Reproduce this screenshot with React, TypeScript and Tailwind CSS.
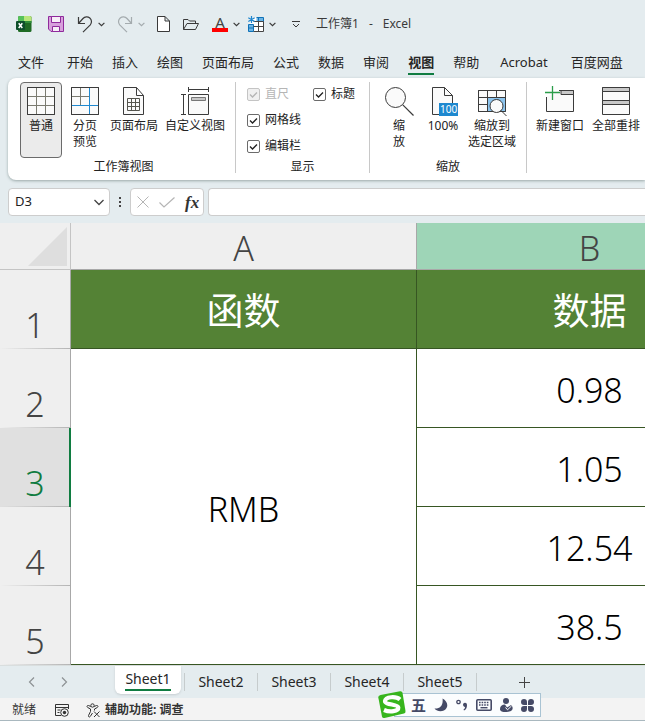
import type { ReactNode } from "react";
import clsx from "clsx";

const Chevron = ({ className }: { className?: string }) => (
  <svg viewBox="0 0 7 5" fill="none" stroke="currentColor" strokeWidth="1.2" className={clsx("w-[7px] h-[5px]", className)}>
    <path d="M.6.8 3.5 3.7 6.4.8" />
  </svg>
);

const TitleBar = () => (
  <header className="flex items-center h-12 pl-4 text-[#3a3a3a]">
    <svg viewBox="0 0 16 16" className="w-4 h-4">
      <rect x="2" y="0" width="13.5" height="16" rx="1.5" fill="#1f6b24" />
      <path d="M2 5V1.500A1.500 1.500 0 0 1 3.500 0H8v5z" fill="#56c15a" />
      <path d="M8 0h6a1.500 1.500 0 0 1 1.500 1.500V5H8z" fill="#b9e67a" />
      <path d="M2 5h13.500v2H2z" fill="#2f8f3a" />
      <rect x="0" y="5" width="9" height="9" rx="1" fill="#0d4f2b" />
      <path d="m2.700 7.200 3.600 4.800M6.300 7.200l-3.600 4.800" stroke="#fff" strokeWidth="1.500" />
    </svg>
    <button aria-label="保存" className="ml-4">
      <svg viewBox="0 0 16 16" fill="#d7a0dc" stroke="#8f2a9c" className="w-4 h-4">
        <path d="M.5.5h15v15H3L.5 13z" />
        <path d="M3.500.5h9v6h-9zM4.500 15.500v-5h7v5z" fill="#f7eef8" />
      </svg>
    </button>
    <button aria-label="撤销" className="ml-[13px]">
      <svg viewBox="0 0 16 17" fill="none" stroke="currentColor" strokeWidth="1.2" className="w-4 h-[17px]">
        <path d="M1.500 1v6.500H8M1.500 7.500 6 2.500a4.800 4.800 0 0 1 7.300 6.300L6 16.200" />
      </svg>
    </button>
    <button aria-label="撤销选项" className="ml-[5px]">
      <Chevron />
    </button>
    <button aria-label="恢复" className="ml-3 text-[#a4abae]">
      <svg viewBox="0 0 16 17" fill="none" stroke="currentColor" strokeWidth="1.2" className="w-4 h-[17px]">
        <path d="M14.500 1v6.500H8M14.500 7.500 10 2.500a4.800 4.800 0 0 0-7.300 6.300L10 16.200" />
      </svg>
    </button>
    <button aria-label="恢复选项" className="ml-[5px] text-[#a4abae]">
      <Chevron />
    </button>
    <button aria-label="新建" className="ml-3">
      <svg viewBox="0 0 13 16" fill="#fff" stroke="currentColor" className="w-[13px] h-4">
        <path d="M.5.5H8l4.500 4.500v10.500H.5zM8 .5V5h4.500" />
      </svg>
    </button>
    <button aria-label="打开" className="ml-[13px]">
      <svg viewBox="0 0 16 13" fill="none" stroke="currentColor" className="w-4 h-[13px]">
        <path d="M.5 11.500V1.500h4.500l1.500 1.500h6v2.500M.5 11.500l3.500-6h11.500l-3 6z" />
      </svg>
    </button>
    <button aria-label="字体颜色" className="flex flex-col items-center w-4 ml-[13px]">
      <span className="text-[15px] leading-[12px] h-3 text-[#444]">A</span>
      <span className="w-4 h-1 bg-[#ff0000]" />
    </button>
    <button aria-label="字体颜色选项" className="ml-[5px]">
      <Chevron />
    </button>
    <button aria-label="插入表格" className="ml-2">
      <svg viewBox="0 0 16 16" fill="none" className="w-4 h-4">
        <path d="M6 1.500h9.500v14H.5V9" fill="#fff" />
        <path d="M8.500 1.500h7v4h-7zM.5 8.500h5v7h-5z" fill="#6cb4e4" />
        <path d="M8.500 1.500h7v4h-7M5.500 8.500v7H.5V8.500h5M.5 12h5M10.500 1.500v4" stroke="#0f72b8" />
        <path d="M5.500 5.500h10v10h-10M5.500 10.500h10M10.500 5.500v10" stroke="#444" />
        <path d="M3.500 0v7M.3 1.800l6.400 3.600M6.700 1.800.3 5.400" stroke="#1f86cf" strokeWidth="1.200" />
      </svg>
    </button>
    <button aria-label="表格选项" className="ml-[5px]">
      <Chevron />
    </button>
    <button aria-label="自定义快速访问工具栏" className="ml-4">
      <svg viewBox="0 0 8 7" fill="none" stroke="currentColor" className="w-2 h-[7px]">
        <path d="M0 .5h8M1 3l3 3 3-3" />
      </svg>
    </button>
    <h1 className="flex gap-2.5 ml-4 text-[12px]">
      <span>工作簿1</span>
      <span>-</span>
      <span>Excel</span>
    </h1>
  </header>
);

const menu = ["开始", "插入", "绘图", "页面布局", "公式", "数据", "审阅", "视图", "帮助"];

const MenuItem = ({ name, className }: { name: string; className?: string }) => (
  <button
    className={clsx(
      "h-[27px] pt-1 border-b-2 leading-[21px]",
      name === "视图" ? "font-bold border-[#107c41]" : "border-transparent",
      className
    )}
  >
    {name}
  </button>
);

const MenuBar = () => (
  <nav className="flex h-[30px] pl-[18px] text-[13px] whitespace-nowrap text-[#262626]">
    <MenuItem name="文件" className="mr-[23px]" />
    <div className="flex gap-[19px]">
      {menu.map((name) => (
        <MenuItem key={name} name={name} />
      ))}
    </div>
    <MenuItem name="Acrobat" className="ml-[21px]" />
    <MenuItem name="百度网盘" className="ml-[23px]" />
  </nav>
);

const Icon = ({ children }: { children: ReactNode }) => (
  <svg viewBox="0 0 30 30" fill="none" stroke="#3b3b3b" className="w-[30px] h-[30px] mb-0.5 shrink-0">
    {children}
  </svg>
);

type ToolProps = { icon: ReactNode; lines: string[]; active?: boolean; className: string };

const Tool = ({ icon, lines, active, className }: ToolProps) => (
  <button
    className={clsx(
      "flex flex-col items-center h-[76px] pt-[3px] border rounded text-[12px] leading-[16px] whitespace-nowrap shrink-0",
      active ? "bg-[#ebebeb] border-[#6b6b6b]" : "border-transparent",
      className
    )}
  >
    {icon}
    {lines.map((line) => (
      <span key={line}>{line}</span>
    ))}
  </button>
);

type GroupProps = { label: string; className: string; labelClass?: string; children: ReactNode };

const Group = ({ label, className, labelClass, children }: GroupProps) => (
  <section className={clsx("flex flex-col shrink-0 h-[91px] border-r border-[#c8c8c8]", className)}>
    <div className="flex h-[76px] shrink-0">{children}</div>
    <h2 className={clsx("shrink-0 text-[12px] leading-[18px] text-center", labelClass)}>{label}</h2>
  </section>
);

const Check = ({ id, label, disabled }: { id: string; label: string; disabled?: boolean }) => (
  <label htmlFor={id} className={clsx("flex items-center gap-[5px] h-[26px] text-[12px]", disabled && "text-[#b5b5b5]")}>
    <span className="relative flex">
      <input
        id={id}
        type="checkbox"
        defaultChecked
        disabled={disabled}
        className="appearance-none w-[13px] h-[13px] rounded-xs border border-[#6b6b6b] bg-white disabled:border-[#c4c4c4] disabled:bg-[#f0f0f0]"
      />
      <svg viewBox="0 0 13 13" fill="none" stroke="currentColor" strokeWidth="1.3" className="absolute inset-0 pointer-events-none">
        <path d="m3 6.500 2.500 2.500L10 4.500" />
      </svg>
    </span>
    {label}
  </label>
);

const Ribbon = () => (
  <div className="flex ml-2 h-[102px] pt-1 pl-3 bg-white rounded-l-lg shadow-[0_1px_3px_#9aa8a8] text-[#222] overflow-hidden">
    <Group label="工作簿视图" className="w-[216px]" labelClass="pr-2">
      <Tool
        active
        className="w-[42px]"
        lines={["普通"]}
        icon={
          <Icon>
            <path d="M1.500 1.500h27v27h-27z" fill="#fafafa" />
            <path d="M10.500 2v26M19.500 2v26M2 10.500h26M2 19.500h26" stroke="#7a7a70" />
            <path d="M1.500 1.500h27v27h-27z" />
          </Icon>
        }
      />
      <Tool
        className="w-[46px]"
        lines={["分页", "预览"]}
        icon={
          <Icon>
            <path d="M1.500 1.500h27v27h-27z" fill="#fafafa" />
            <path d="M10.500 2v17M2 10.500h17" stroke="#7a7a70" />
            <path d="M1.500 1.500h27v27h-27z" />
            <path d="M19.500 2v26M2 19.500h26" stroke="#1e88cf" />
          </Icon>
        }
      />
      <Tool
        className="w-[52px]"
        lines={["页面布局"]}
        icon={
          <Icon>
            <path d="M4.500 1.500h13l7 8v19h-20zM17.500 1.500v8h7" fill="#fafafa" />
            <path d="M8.500 12.500h12v12h-12zM12.500 12.500v12M16.500 12.500v12M8.500 16.500h12M8.500 20.500h12" stroke="#55554e" />
          </Icon>
        }
      />
      <Tool
        className="w-[70px]"
        lines={["自定义视图"]}
        icon={
          <Icon>
            <path d="M8.500 8.500h20v20h-20z" fill="#fafafa" />
            <path d="M11.500 11.500h14v3h-14z" fill="#c8c8c8" stroke="#777" />
            <path d="M8.500 1v5M28.500 1v5M8.500 3.500h20M1 8.500h5M1 28.500h5M3.500 8.500v20" />
          </Icon>
        }
      />
    </Group>
    <Group label="显示" className="w-[134px]">
      <div className="grid grid-cols-[66px_auto] content-start pl-[11px] -mt-px">
        <Check id="ruler" label="直尺" disabled />
        <Check id="headings" label="标题" />
        <div className="col-span-2">
          <Check id="gridlines" label="网格线" />
          <Check id="formula-bar" label="编辑栏" />
        </div>
      </div>
    </Group>
    <Group label="缩放" className="w-[157px]">
      <Tool
        className="w-[30px] ml-3.5"
        lines={["缩", "放"]}
        icon={
          <Icon>
            <circle cx="11.500" cy="11.500" r="10" fill="#fafafa" />
            <path d="m18.800 18.800 10.700 10.700" strokeWidth="1.200" />
          </Icon>
        }
      />
      <Tool
        className="w-[58px]"
        lines={["100%"]}
        icon={
          <Icon>
            <path d="M4.500 1.500h12l8 8v19h-20z" fill="#fafafa" />
            <path d="M16.500 1.500v8h8" />
            <path d="M11 17h19v13H11z" fill="#1e88cf" stroke="none" />
            <text x="12" y="27" fontSize="10" fill="#fff" stroke="none">
              100
            </text>
          </Icon>
        }
      />
      <Tool
        className="w-[40px]"
        lines={["缩放到", "选定区域"]}
        icon={
          <Icon>
            <path d="M1.500 4.500h27v21h-27z" fill="#fafafa" />
            <path d="M10.500 11.500h18v14h-18z" fill="#8cc4ee" stroke="#1e78c0" />
            <path d="M10.500 4.500v21M19.500 4.500v7M1.500 11.500h27M1.500 18.500h9M1.500 4.500h27v21h-27z" />
            <circle cx="19.500" cy="20" r="6.500" fill="#fafafa" />
            <path d="m24 24.500 5.500 5.500" />
          </Icon>
        }
      />
    </Group>
    <div className="flex shrink-0">
      <Tool
        className="w-[56px] ml-[5px]"
        lines={["新建窗口"]}
        icon={
          <Icon>
            <path d="M1.500 11v14.500h27V4.500H14" fill="#fafafa" />
            <path d="M16 4.500h12.500v4H16z" fill="#c8c8c8" />
            <path d="M7.500 0v14M0 6.500h15" stroke="#2a9d4a" strokeWidth="1.300" />
          </Icon>
        }
      />
      <Tool
        className="w-[56px]"
        lines={["全部重排"]}
        icon={
          <Icon>
            <path d="M1.500 1.500h27v27h-27z" fill="#fafafa" />
            <path d="M1.500 1.500h27v4h-27zM1.500 14.500h27v4h-27z" fill="#c8c8c8" />
          </Icon>
        }
      />
    </div>
  </div>
);

const FormulaBar = () => (
  <div className="flex items-center h-[43px] pl-2 pt-px">
    <div className="flex items-center w-[102px] h-[28px] pl-1.5 pr-1 bg-white border border-[#cdcdcd] rounded text-[13px]">
      <input aria-label="名称框" defaultValue="D3" className="w-full min-w-0 outline-none text-[#222]" />
      <svg viewBox="0 0 12 7" fill="none" stroke="#444" strokeWidth="1.3" className="w-3 h-[7px] shrink-0">
        <path d="m1.500 1 4.500 4.500L10.500 1" />
      </svg>
    </div>
    <svg viewBox="0 0 2 10" fill="#444" className="w-0.5 h-2.5 mx-[9px]">
      <path d="M0 0h2v2H0zM0 4h2v2H0zM0 8h2v2H0z" />
    </svg>
    <div className="flex items-center w-[74px] h-[28px] pl-1.5 gap-2.5 bg-white border border-[#cdcdcd] rounded">
      <button aria-label="取消">
        <svg viewBox="0 0 12 12" stroke="#b5b5b5" className="w-3 h-3">
          <path d="m.5.500 11 11M11.500.5l-11 11" />
        </svg>
      </button>
      <button aria-label="输入">
        <svg viewBox="0 0 16 11" fill="none" stroke="#b5b5b5" strokeWidth="1.200" className="w-4 h-[11px]">
          <path d="m.5 5.500 4.500 4.500L15.500.5" />
        </svg>
      </button>
      <button aria-label="插入函数" className="font-['Liberation_Serif',serif] italic font-bold text-[17px] leading-none text-[#333]">
        fx
      </button>
    </div>
    <input aria-label="编辑栏内容" className="flex-1 min-w-0 h-[28px] ml-1 bg-white border border-r-0 border-[#cdcdcd] rounded-l outline-none" />
  </div>
);

const values = ["0.98", "1.05", "12.54", "38.5"];

const rowHead =
  "border-r border-[#a8a8a8] bg-[linear-gradient(to_right,transparent,#b4b4b4)] bg-[length:100%_1px] bg-bottom bg-no-repeat align-bottom pb-[7px] font-light";
const cell = "border-r border-b border-[#375623] text-center pt-1";

const Sheet = () => (
  <div className="overflow-hidden bg-white">
    <table className="table-fixed border-separate border-spacing-0 w-[763px] text-[34px] leading-[34px] text-black">
      <colgroup>
        <col className="w-[71px]" />
        <col className="w-[346px]" />
        <col className="w-[346px]" />
      </colgroup>
      <thead>
        <tr className="h-[47px] text-[#444]">
          <td className="bg-[#efefef] border-r border-b border-[#c4c4c4] p-0 align-bottom">
            <svg viewBox="0 0 39 39" fill="#dedede" className="w-[39px] h-[39px] ml-auto mr-[3px] mb-[3px]">
              <path d="M39 0v39H0z" />
            </svg>
          </td>
          <th className="bg-[#efefef] border-r border-b border-[#a8a8a8] p-0 pt-1 font-light">A</th>
          <th className="bg-[#9ed5b7] border-r border-b border-[#a8a8a8] p-0 pt-1 font-light">B</th>
        </tr>
      </thead>
      <tbody>
        <tr className="h-[79px]">
          <th className={clsx(rowHead, "bg-[#efefef] text-[#444]")}>1</th>
          <th className={clsx(cell, "bg-[#548235] text-white text-[37px] font-normal")}>函数</th>
          <th className={clsx(cell, "bg-[#548235] text-white text-[37px] font-normal")}>数据</th>
        </tr>
        {values.map((value, i) => (
          <tr key={value} className="h-[79px]">
            <th
              className={clsx(
                rowHead,
                i === 1 ? "bg-[#e0e0e0] text-[#107c41] shadow-[inset_-1px_0_#107c41] border-r-[#107c41]" : "bg-[#efefef] text-[#444]"
              )}
            >
              {i + 2}
            </th>
            {i === 0 && (
              <td rowSpan={4} className={clsx(cell, "font-light")}>
                RMB
              </td>
            )}
            <td className={clsx(cell, "font-light")}>{value}</td>
          </tr>
        ))}
      </tbody>
    </table>
  </div>
);

const SheetTabs = () => (
  <div className="flex items-center h-[33px] text-[14px] text-[#262626] border-t border-[#d9dede]">
    <button aria-label="上一张" className="ml-7">
      <svg viewBox="0 0 7 10" fill="none" stroke="#8d9294" strokeWidth="1.200" className="w-[7px] h-2.5">
        <path d="M6 .5 1.500 5 6 9.500" />
      </svg>
    </button>
    <button aria-label="下一张" className="ml-[26px]">
      <svg viewBox="0 0 7 10" fill="none" stroke="#8d9294" strokeWidth="1.200" className="w-[7px] h-2.5">
        <path d="M1 .5 5.500 5 1 9.500" />
      </svg>
    </button>
    <button className="self-start flex justify-center w-[66px] h-[28px] ml-[47px] bg-white rounded-b-md shadow-sm">
      <span className="h-[25px] leading-[26px] border-b-2 border-[#107c41]">Sheet1</span>
    </button>
    <div className="flex ml-[3px]">
      {["Sheet2", "Sheet3", "Sheet4", "Sheet5"].map((name) => (
        <button key={name} className="w-[73px] h-[18px] leading-[18px] border-l border-[#c6cccd]">
          {name}
        </button>
      ))}
    </div>
    <button aria-label="新工作表" className="flex items-center h-[18px] pl-[42px] border-l border-[#c6cccd]">
      <svg viewBox="0 0 11 11" stroke="#444" className="w-[11px] h-[11px]">
        <path d="M5.500 0v11M0 5.500h11" />
      </svg>
    </button>
  </div>
);

const StatusBar = () => (
  <footer className="flex items-center h-[23px] pl-3 pt-0.5 bg-[#f3f3f3] border-b border-[#a9b8bf] text-[12px] text-[#333]">
    <span>就绪</span>
    <button aria-label="录制宏" className="ml-[19px]">
      <svg viewBox="0 0 14 13" fill="none" stroke="#333" className="w-3.5 h-[13px]">
        <path d="M6 11.500H.5V.5h13V5M.5 3.500h13M2.500 6h3M2.500 8.500h2" />
        <circle cx="9.500" cy="8.500" r="3.800" fill="#f3f3f3" />
        <circle cx="9.500" cy="8.500" r="1.700" fill="#333" stroke="none" />
      </svg>
    </button>
    <button className="flex items-center gap-1 ml-[17px] font-bold">
      <svg viewBox="0 0 15 15" fill="none" stroke="#333" className="w-[15px] h-[15px]">
        <circle cx="6.500" cy="2.500" r="1.700" />
        <path d="M4.800 3.500 2.500 2.500C1 2 .5 4 1.700 4.500L4.500 6v2.500l-2 4c-.5 1.500 1.200 2 1.800.9L6.500 10M8.200 3.500l2.300-1c1.500-.5 2 1.500.8 2L8.500 6v1.500M8 8.500l5.500 5.500M13.500 8.500 8 14" />
      </svg>
      辅助功能: 调查
    </button>
  </footer>
);

// Input method toolbar, floats over the status bar
const ImeBar = () => (
  <div className="absolute left-[378px] bottom-[2px] flex items-center text-[#454a66]">
    <svg viewBox="0 0 28 28" className="w-7 h-7 z-10">
      <path d="M2.500 4 22 .3q2-.3 2.500 1.500L27.500 20q.3 2-1.500 2.500L6.500 27q-2 .4-2.500-1.500L.3 6.500Q0 4.500 2.500 4z" fill="#37b51d" />
      <path
        d="M22 8.500C18 5 7.500 5.500 7 10c-.4 4 13 3 13.300 6.500.2 4-8.500 5-14.300 2.500"
        fill="none"
        stroke="#fff"
        strokeWidth="4.200"
      />
    </svg>
    <div className="flex items-center h-6 -ml-3 pl-4 pr-1.5 gap-2 bg-[#fbfdfe] border border-[#a9c3d3]">
      <span className="text-[15px] leading-none font-bold">五</span>
      <svg viewBox="0 0 14 14" fill="currentColor" className="w-3.5 h-3.5">
        <path d="M8.500.5c4 2 6 6 4 9.500-2.200 4-9 4.500-12 .5C6 11 9.500 7 8.500.5z" />
      </svg>
      <svg viewBox="0 0 12 12" className="w-3 h-3">
        <circle cx="2.500" cy="3" r="1.700" fill="none" stroke="currentColor" strokeWidth="1.300" />
        <path d="M7 5.500a2 2 0 1 1 4 .5c0 3-1 4.500-3 5.500l-.5-1c1-.6 1.500-1.500 1.500-2.500-1 0-2-1-2-2.500z" fill="currentColor" />
      </svg>
      <svg viewBox="0 0 16 12" fill="none" stroke="currentColor" className="w-4 h-3">
        <rect x=".8" y=".8" width="14.400" height="10.400" rx="1" strokeWidth="1.600" />
        <path d="M3 3.500h10M3 6h10" strokeWidth="1.400" strokeDasharray="1.600 1" />
        <path d="M4.500 8.700h7" strokeWidth="1.400" />
      </svg>
      <svg viewBox="0 0 13 14" fill="currentColor" className="w-[13px] h-3.5">
        <circle cx="6" cy="3" r="3" />
        <path d="M0 11c0-3 2-4.500 5-4.500l2 3 4-2.500c2 1.500 2 4 1 5-2 2.500-9 2.500-11 1-.7-.5-1-1-1-2z" />
        <path d="m5.500 9.500 2 2.300L11.500 8" fill="none" stroke="#fff" />
      </svg>
      <svg viewBox="0 0 13 13" fill="currentColor" className="w-[13px] h-[13px]">
        <path d="M3 0a3 3 0 0 1 3 3v3H3a3 3 0 0 1 0-6zM10 0a3 3 0 0 1 0 6H7V3a3 3 0 0 1 3-3zM3 7h3v3a3 3 0 1 1-3-3zM7 7h3a3 3 0 1 1-3 3z" />
      </svg>
    </div>
  </div>
);

export default function App() {
  return (
    <div className="relative w-full overflow-hidden bg-[#e4ecef] font-['Noto_Sans','Noto_Sans_CJK_SC',sans-serif]">
      <TitleBar />
      <MenuBar />
      <Ribbon />
      <FormulaBar />
      <Sheet />
      <SheetTabs />
      <StatusBar />
      <ImeBar />
    </div>
  );
}
